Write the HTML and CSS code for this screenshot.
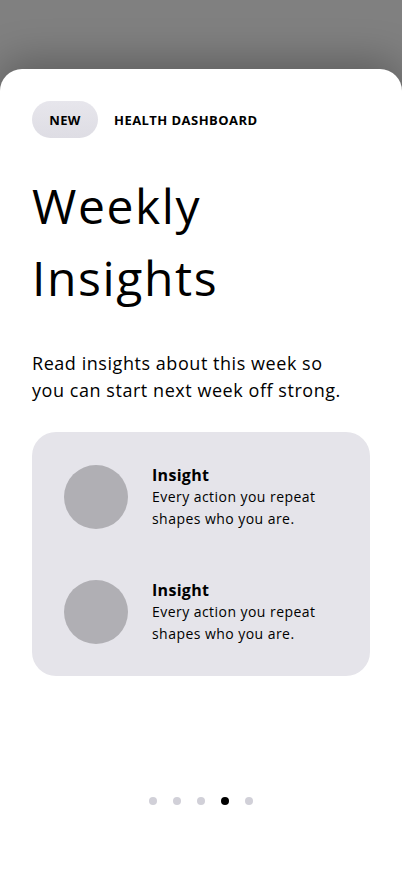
FILE: index.html
```html
<!DOCTYPE html>
<html>
<head>
<meta charset="utf-8">
<link rel="stylesheet" href="styles.css">
</head>
<body>
<div class="backdrop"></div>
<main class="sheet">
  <div class="tags">
    <span class="badge">NEW</span>
    <span class="label">HEALTH DASHBOARD</span>
  </div>
  <h1 class="title">Weekly<br>Insights</h1>
  <p class="lead">Read insights about this week so you can start next week off strong.</p>
  <section class="card">
    <div class="item">
      <div class="avatar"></div>
      <div class="text">
        <div class="item-title">Insight</div>
        <div class="item-body">Every action you repeat shapes who you are.</div>
      </div>
    </div>
    <div class="item">
      <div class="avatar"></div>
      <div class="text">
        <div class="item-title">Insight</div>
        <div class="item-body">Every action you repeat shapes who you are.</div>
      </div>
    </div>
  </section>
  <div class="dots">
    <span class="dot"></span><span class="dot"></span><span class="dot"></span><span class="dot active"></span><span class="dot"></span>
  </div>
</main>
</body>
</html>
```
FILE: styles.css
```css
* { box-sizing: border-box; }
html, body { margin: 0; padding: 0; }
body {
  width: 402px;
  height: 874px;
  overflow: hidden;
  background: #808080;
  font-family: "Open Sans", "DejaVu Sans", sans-serif;
  color: #000;
  display: flex;
  flex-direction: column;
}
.backdrop {
  height: 69px;
  flex: none;
}
.sheet {
  flex: 1;
  background: #fff;
  border-radius: 22px 22px 0 0;
  box-shadow: 0 -8px 40px rgba(0,0,0,0.28);
  padding: 32px 32px 0 32px;
  display: flex;
  flex-direction: column;
}
.tags {
  display: flex;
  align-items: center;
  gap: 16px;
}
.badge {
  display: inline-flex;
  align-items: center;
  justify-content: center;
  width: 66px;
  height: 37px;
  border-radius: 19px;
  background: linear-gradient(180deg, #e7e6ec, #dedde4);
  font-weight: 700;
  font-size: 13px;
  letter-spacing: 0.4px;
}
.label {
  font-weight: 700;
  font-size: 13px;
  letter-spacing: 0.45px;
}
.title {
  margin: 32px 0 0 0;
  font-weight: 400;
  font-size: 48px;
  line-height: 72px;
  letter-spacing: 1.6px;
}
.lead {
  margin: 36px 0 0 0;
  font-size: 18px;
  line-height: 27px;
  letter-spacing: 0.55px;
  max-width: 310px;
}
.card {
  margin-top: 28px;
  width: 338px;
  background: #e5e4ea;
  border-radius: 24px;
  padding: 33px 32px 32px 32px;
  display: flex;
  flex-direction: column;
  gap: 51px;
}
.item {
  display: flex;
  align-items: center;
  gap: 24px;
  height: 64px;
}
.avatar {
  width: 64px;
  height: 64px;
  border-radius: 50%;
  background: #b0afb4;
  flex: none;
}
.text { margin-top: -1px; }
.item-title {
  font-weight: 700;
  font-size: 16px;
  line-height: 22px;
  letter-spacing: 0.3px;
}
.item-body {
  font-size: 14px;
  line-height: 22px;
  letter-spacing: 0.45px;
  width: 180px;
}
.dots {
  margin-top: 121px;
  display: flex;
  justify-content: center;
  gap: 16px;
}
.dot {
  width: 8px;
  height: 8px;
  border-radius: 50%;
  background: #d1d0d8;
}
.dot.active { background: #000; }
```
